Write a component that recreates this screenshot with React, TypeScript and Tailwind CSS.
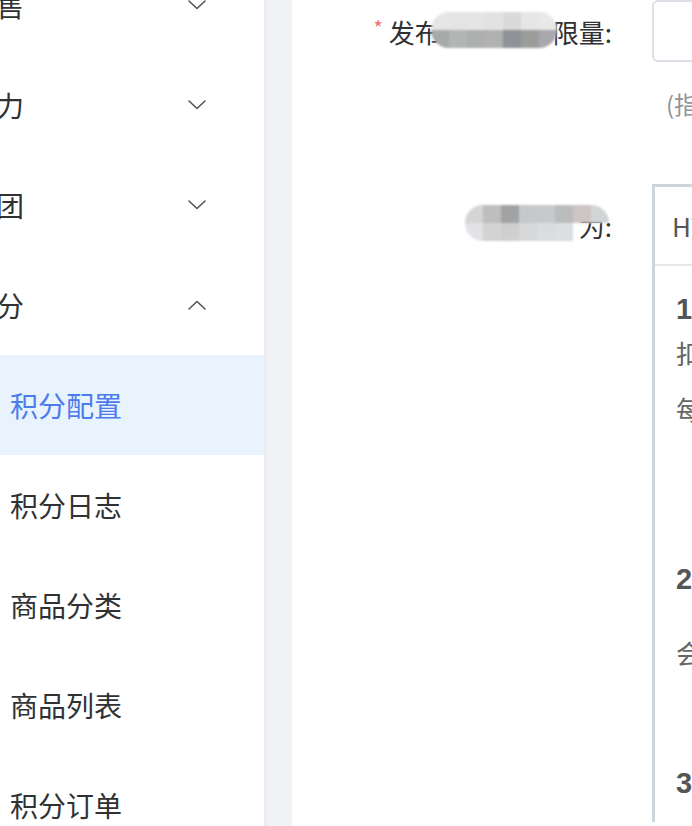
import React from 'react';

const font = { fontFamily: '"Noto Sans CJK SC", "Noto Sans", sans-serif' };
const numFont = { fontFamily: '"Liberation Sans", "Noto Sans CJK SC", sans-serif' };

function Chevron({ up }: { up?: boolean }) {
  return (
    <svg width="18" height="10" viewBox="0 0 18 10" fill="none" className="text-[#555]">
      <path
        d={up ? 'M1 9 L9 1.5 L17 9' : 'M1 1 L9 8.5 L17 1'}
        stroke="currentColor"
        strokeWidth="1.6"
        strokeLinecap="round"
        strokeLinejoin="round"
      />
    </svg>
  );
}

const groups = [
  { label: '售', open: false },
  { label: '力', open: false },
  { label: '团', open: false },
  { label: '分', open: true },
];

const children = ['积分配置', '积分日志', '商品分类', '商品列表', '积分订单'];

function Mosaic({ cells, className }: { cells: string[][]; className?: string }) {
  return (
    <div className={'relative z-10 flex flex-col blur-[1px] rounded-full overflow-hidden ' + (className ?? '')}>
      {cells.map((row, i) => (
        <div key={i} className="flex">
          {row.map((c, j) => (
            <div key={j} className={'w-[18px] h-[18px] ' + c} />
          ))}
        </div>
      ))}
    </div>
  );
}

export default function App() {
  return (
    <div className="flex h-[826px] w-[692px] overflow-hidden bg-white" style={font}>
      {/* Sidebar */}
      <aside className="w-[264px] shrink-0 overflow-hidden bg-white">
        <div className="mt-[-45px]">
          {groups.map((g) => (
            <div key={g.label} className="h-[100px] flex items-center justify-between pr-[58px]">
              <span className="ml-[-4px] text-[28px] text-[#303133]">{g.label}</span>
              <Chevron up={g.open} />
            </div>
          ))}
          {children.map((c, i) => (
            <div
              key={c}
              className={
                'h-[100px] flex items-center pl-[10px] text-[28px] ' +
                (i === 0 ? 'bg-[#e8f3fe] text-[#4b7bec]' : 'text-[#303133]')
              }
            >
              {c}
            </div>
          ))}
        </div>
      </aside>

      {/* Gutter */}
      <div className="w-[28px] shrink-0 bg-[#f0f2f5] shadow-[inset_3px_0_4px_-2px_rgba(0,0,0,0.06)]" />

      {/* Main form */}
      <main className="flex-1 overflow-hidden">
        <div className="flex">
          <div className="w-[320px] shrink-0 h-[62px] flex items-center justify-end text-[26px] text-[#303133]">
            <span className="text-[#f56c6c] text-[20px] mr-[6px] mt-[-6px]">*</span>
            <span>发布</span>
            <Mosaic
              className="ml-[-10px] mr-[-4px] -translate-y-[1px]"
              cells={[
                ['bg-[#e6e6e6]', 'bg-[#e4e4e4]', 'bg-[#e5e5e5]', 'bg-[#e2e2e2]', 'bg-[#dadada]', 'bg-[#e6e6e6]', 'bg-[#e8e8e8]'],
                ['bg-[#a7aaa9]', 'bg-[#b3b4b4]', 'bg-[#adb0ad]', 'bg-[#b0b1b0]', 'bg-[#8f9296]', 'bg-[#9b9d9b]', 'bg-[#a8a8ac]'],
              ]}
            />
            <span>限量:</span>
          </div>
          <div className="ml-[40px] w-[400px] shrink-0 h-[62px] rounded-[6px] border-2 border-[#dcdfe6]" />
        </div>
        <div className="flex">
          <div className="w-[320px] shrink-0" />
          <div className="ml-[54px] mt-[26px] text-[24px] leading-[32px] text-[#909399] whitespace-nowrap">(指定时间内限量发布数量)</div>
        </div>

        <div className="flex mt-[64px]">
          <div className="w-[320px] shrink-0 h-[82px] flex items-center justify-end text-[26px] text-[#303133]">
            <Mosaic
              className="mr-[-30px] translate-y-[-2px]"
              cells={[
                ['bg-[#d6d4d4]', 'bg-[#bcbfbe]', 'bg-[#a2a2a2]', 'bg-[#c6c9cb]', 'bg-[#c8c9cb]', 'bg-[#bbbcbe]', 'bg-[#cdc5c4]', 'bg-[#d3d4d6]'],
                ['bg-[#e2e2e6]', 'bg-[#d3d3d3]', 'bg-[#cfcfcf]', 'bg-[#d7d8da]', 'bg-[#dadcdd]', 'bg-[#dcdee0]', 'bg-transparent', 'bg-transparent'],
              ]}
            />
            <span>为:</span>
          </div>
          <div className="ml-[40px] w-[400px] shrink-0 border-l-[3px] border-t-[3px] border-[#ccd6da]">
            <div className="h-[79px] flex items-center pl-[17px] text-[26px] text-[#555] border-b-2 border-[#e8e8e8]">
              HTML
            </div>
            <div className="pl-[21px] pt-[24px] text-[26px] text-[#666] whitespace-nowrap">
              <div className="h-[40px] flex items-center font-bold text-[29px] text-[#555]" style={numFont}>1、积分获取</div>
              <div className="h-[44px] flex items-center">扣除积分规则</div>
              <div className="h-[68px] flex items-center">每日签到获得积分</div>
              <div className="h-[104px]" />
              <div className="h-[68px] flex items-center font-bold text-[29px] text-[#555]" style={numFont}>2、积分使用</div>
              <div className="h-[76px] flex items-center">会员可使用积分兑换商品</div>
              <div className="h-[56px]" />
              <div className="h-[76px] flex items-center font-bold text-[29px] text-[#555]" style={numFont}>3、积分说明</div>
            </div>
          </div>
        </div>
      </main>
    </div>
  );
}
